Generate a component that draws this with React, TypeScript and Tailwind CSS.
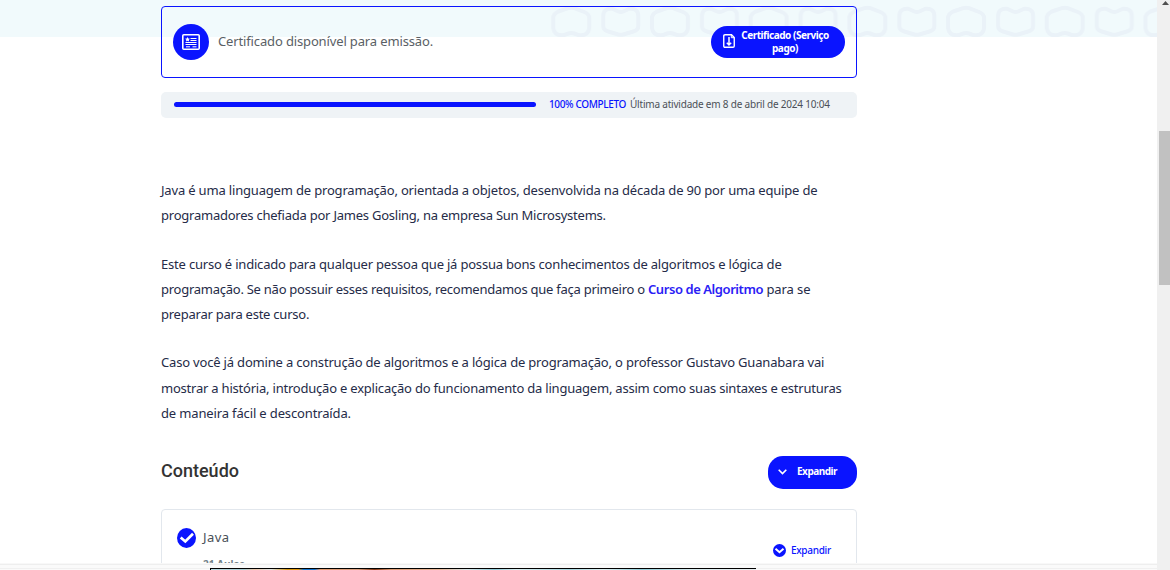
import type { ReactNode } from "react";

function BandPattern() {
  return (
    <svg className="absolute left-0 top-0 h-[37px] w-[1157px]" viewBox="0 0 1157 37" aria-hidden="true">
      <defs>
        <pattern id="tiles" x="546.3" y="0" width="98.7" height="60" patternUnits="userSpaceOnUse">
          <g fill="none" stroke="#eaf2f8" strokeWidth="4" strokeLinejoin="round">
            <path d="M12 11.5 L22 8.2 Q25 7.2 28 8.2 L38 12 Q43 14 43 18 V28 Q42 36 33 35.3 L28 33.5 Q25 32.5 22 33.5 L17 35.3 Q8 36 7 28 V18 Q7 14 12 11.5 Z" />
            <path d="M66 8.8 L72 11.5 Q74.5 12.5 77 11.5 L83 8.8 Q92 8 92 16 V26 Q92 30 87 31.5 L77 34.5 Q74.5 35.2 72 34.5 L62 31.5 Q57 30 57 26 V16 Q57 8 66 8.8 Z" />
          </g>
        </pattern>
      </defs>
      <rect x="548" width="609" height="37" fill="url(#tiles)" />
    </svg>
  );
}

function CertificateIcon() {
  return (
    <svg width="18" height="16" viewBox="0 0 18 16" fill="none" stroke="white" aria-hidden="true">
      <rect x="0.8" y="0.8" width="16.4" height="14.4" rx="1" strokeWidth="1.6" />
      <path d="M8.5 4.5h6M8.5 6.5h6M3.5 8.5h11M3.5 10.5h11" strokeWidth="1" />
      <path d="M4 12.8h4M10.5 12.8h4" strokeWidth="1" />
      <path d="m5.5 3 .8 1.5 1.7.2-1.2 1.1.3 1.7-1.6-.8-1.5.8.3-1.7L3 4.7l1.7-.2Z" fill="white" stroke="none" />
    </svg>
  );
}

function DownloadIcon() {
  return (
    <svg className="-mt-[2px]" width="12" height="14" viewBox="0 0 12 14" fill="none" stroke="white" aria-hidden="true">
      <path d="M2 .75h6.5L11.25 3.5V12q0 1.25-1.25 1.25H2Q.75 13.25.75 12V2Q.75.75 2 .75Z" strokeWidth="1.4" />
      <path d="M8.3 1v2.7H11" strokeWidth="1" />
      <path d="M6 3v8M3.8 8.8 6 11l2.2-2.2" strokeWidth="1.5" />
    </svg>
  );
}

function Line({ className, children }: { className: string; children: ReactNode }) {
  return <span className={`block whitespace-nowrap ${className}`}>{children}</span>;
}

export default function App() {
  return (
    <div className="relative flex h-[570px] w-[1170px] overflow-hidden bg-white font-['Noto_Sans',sans-serif]">
      <div className="relative h-[570px] w-[1157px] shrink-0">
        <div className="absolute inset-x-0 top-0 h-[37px] bg-[#f1fafc]">
          <BandPattern />
        </div>

        <main className="relative ml-[161px] flex w-[696px] flex-col pt-[6px]">
          <section className="flex h-[72px] items-center rounded-[4px] border border-[#0a14ff] pl-[11px] pr-[11px]">
            <div className="flex size-9 items-center justify-center rounded-full bg-[#0a14ff]">
              <CertificateIcon />
            </div>
            <p className="ml-[9px] whitespace-nowrap text-[13px] tracking-[-0.14px] text-[#5a5f66]">
              Certificado disponível para emissão.
            </p>
            <button className="ml-auto flex h-8 w-[134px] items-center rounded-full bg-[#0a14ff] pl-3 text-[10px] font-bold leading-[13px] text-white">
              <DownloadIcon />
              <span className="-mt-px ml-[6px] w-[88px] whitespace-nowrap text-center tracking-[-0.46px]">
                Certificado (Serviço
                <br />
                pago)
              </span>
            </button>
          </section>

          <section className="mt-[14px] flex h-[26px] items-center rounded-[5px] bg-[#eff3f6] pl-[13px] text-[10px] leading-none">
            <div className="-mt-px h-[5px] w-[362px] rounded-full bg-[#0a14ff]" />
            <span className="-mt-[2px] ml-[13px] w-[81px] whitespace-nowrap font-medium tracking-[-0.36px] text-[#0a14ff]">
              100% COMPLETO
            </span>
            <span className="-mt-[2px] whitespace-nowrap tracking-[-0.2px] text-[#4b5057]">
              Última atividade em 8 de abril de 2024 10:04
            </span>
          </section>

          <article className="mt-[60px] text-[13px] leading-[25px] text-[#252b48]">
            <p>
              <Line className="tracking-[-0.175px]">
                Java é uma linguagem de programação, orientada a objetos, desenvolvida na década de 90 por uma equipe de
              </Line>
              <Line className="tracking-[-0.235px]">
                programadores chefiada por James Gosling, na empresa Sun Microsystems.
              </Line>
            </p>
            <p className="mt-6">
              <Line className="tracking-[-0.195px]">
                Este curso é indicado para qualquer pessoa que já possua bons conhecimentos de algoritmos e lógica de
              </Line>
              <Line className="tracking-[-0.257px]">
                programação. Se não possuir esses requisitos, recomendamos que faça primeiro o{" "}
                <a className="font-semibold tracking-[-0.43px] text-[#2a20f5]">Curso de Algoritmo</a>
                <span className="tracking-[-0.08px]"> para se</span>
              </Line>
              <Line className="tracking-[-0.24px]">preparar para este curso.</Line>
            </p>
            <p className="mt-[23px] leading-[25.5px]">
              <Line className="tracking-[-0.18px]">
                Caso você já domine a construção de algoritmos e a lógica de programação, o professor Gustavo Guanabara vai
              </Line>
              <Line className="tracking-[-0.215px]">
                mostrar a história, introdução e explicação do funcionamento da linguagem, assim como suas sintaxes e estruturas
              </Line>
              <Line className="tracking-[-0.14px]">de maneira fácil e descontraída.</Line>
            </p>
          </article>

          <div className="mt-[29.5px] flex h-[33px] items-center justify-between">
            <h2 className="pb-[3px] font-['Roboto',sans-serif] text-[18px] font-medium leading-none text-[#333]">
              Conteúdo
            </h2>
            <button className="flex h-[33px] w-[89px] items-center rounded-[15px] bg-[#0a14ff] pb-[2px] pl-[10px] text-[10px] font-bold tracking-[-0.5px] text-white">
              <svg width="9" height="6" viewBox="0 0 9 6" fill="none" aria-hidden="true">
                <path d="M.7.8 4.5 4.6 8.3.8" stroke="white" strokeWidth="1.6" />
              </svg>
              <span className="ml-[10px]">Expandir</span>
            </button>
          </div>

          <section className="mt-5 flex h-[100px] items-start rounded-[4px] border border-[#e2e7ed] pl-[15px] pr-[25px]">
            <svg className="mt-[18px]" width="19" height="20" viewBox="0 0 19 20" aria-hidden="true">
              <ellipse cx="9.5" cy="10" rx="9.5" ry="10" fill="#0a14ff" />
              <path d="m3.7 9.5 4.6 4L16 5.8" fill="none" stroke="white" strokeWidth="2.7" />
            </svg>
            <div className="ml-[7px] pt-[18px]">
              <p className="text-[13px] leading-[19px] tracking-[0.4px] text-[#495057]">Java</p>
              <p className="mt-[8px] text-[10px] font-bold leading-[18px] text-[#728188]">21 Aulas</p>
            </div>
            <div className="ml-auto mt-[34px] flex h-[13px] items-center text-[10px] font-medium leading-none tracking-[-0.28px] text-[#0a14ff]">
              <svg width="13" height="13" viewBox="0 0 13 13" aria-hidden="true">
                <circle cx="6.5" cy="6.5" r="6.5" fill="#0a14ff" />
                <path d="m2.5 4.8 4 3.4 4-3.4" fill="none" stroke="white" strokeWidth="2" />
              </svg>
              <span className="-mt-px ml-[5px]">Expandir</span>
            </div>
          </section>
        </main>
      </div>

      <aside className="relative h-[570px] w-[13px] shrink-0 bg-[#f0f0f0]">
        <svg className="absolute left-[5px] top-px" width="7" height="4" viewBox="0 0 7 4" aria-hidden="true">
          <path d="M3.5 0 7 4H0Z" fill="#505050" />
        </svg>
        <div className="ml-[2px] mt-[131px] h-[154px] w-[11px] bg-[#c1c1c1]" />
      </aside>

      <div className="absolute bottom-0 left-0 h-[7px] w-[1157px] border-t border-[#f8f8f8] bg-[#fafafa]">
        <div className="h-px bg-[#eeeeee]" />
        <div className="mt-[3px] h-px bg-[#f0f0f0]" />
        <div className="absolute bottom-0 left-[210px] h-[2px] w-[546px] border-l border-t border-black bg-[linear-gradient(90deg,#b9d9df_0%,#a9cdd4_6%,#edc8aa_8%,#e0e4e4_11%,#d89a16_14%,#e59a0a_16%,#1678d2_17%,#1678d2_19%,#e49b6f_20%,#dba080_27%,#8b3a18_30%,#dc9a72_33%,#e8b799_42%,#d9e6e8_47%,#8fcbd8_52%,#d9edf0_56%,#a8d7df_66%,#def0f2_72%,#91ced9_79%,#d9ecef_88%,#e9eef0_100%)]" />
      </div>
    </div>
  );
}
